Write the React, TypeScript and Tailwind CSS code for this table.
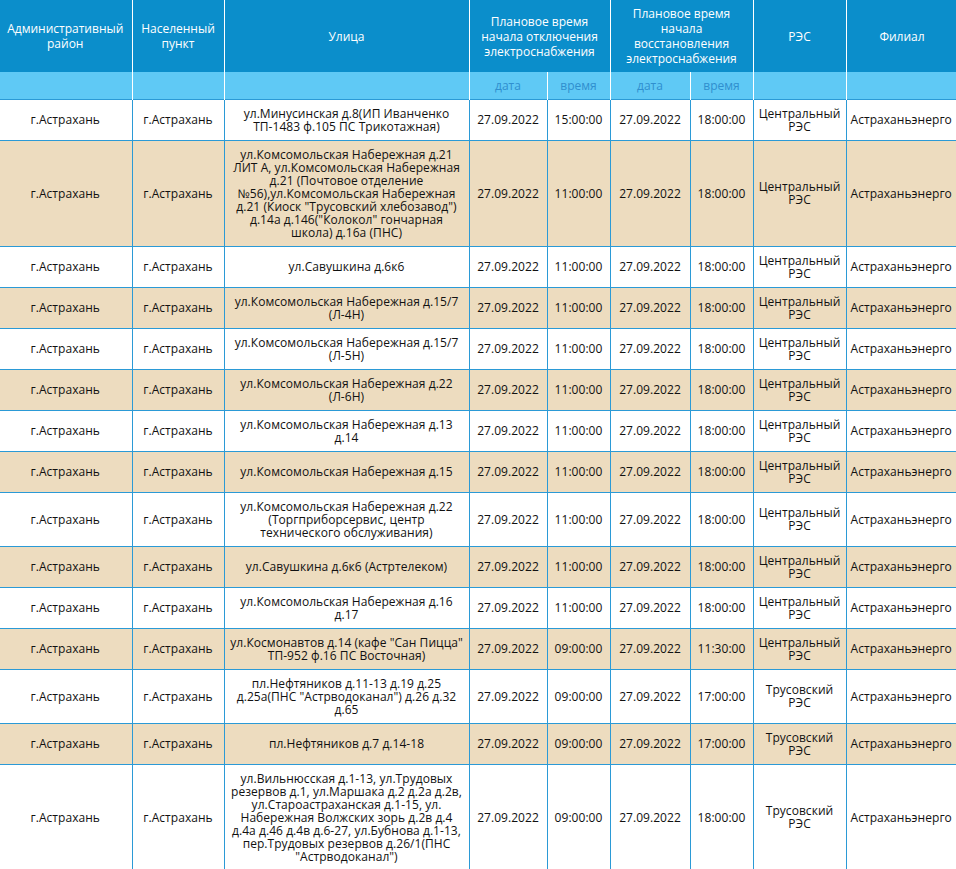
import React from 'react';

type Row = {
  street: string;
  offTime: string;
  onTime: string;
  res: string;
};

const rows: Row[] = [
  { street: 'ул.Минусинская д.8(ИП Иванченко ТП-1483 ф.105 ПС Трикотажная)', offTime: '15:00:00', onTime: '18:00:00', res: 'Центральный РЭС' },
  { street: 'ул.Комсомольская Набережная д.21 ЛИТ А, ул.Комсомольская Набережная д.21 (Почтовое отделение №56),ул.Комсомольская Набережная д.21 (Киоск "Трусовский хлебозавод") д.14а д.146("Колокол" гончарная школа) д.16а (ПНС)', offTime: '11:00:00', onTime: '18:00:00', res: 'Центральный РЭС' },
  { street: 'ул.Савушкина д.6к6', offTime: '11:00:00', onTime: '18:00:00', res: 'Центральный РЭС' },
  { street: 'ул.Комсомольская Набережная д.15/7 (Л-4Н)', offTime: '11:00:00', onTime: '18:00:00', res: 'Центральный РЭС' },
  { street: 'ул.Комсомольская Набережная д.15/7 (Л-5Н)', offTime: '11:00:00', onTime: '18:00:00', res: 'Центральный РЭС' },
  { street: 'ул.Комсомольская Набережная д.22 (Л-6Н)', offTime: '11:00:00', onTime: '18:00:00', res: 'Центральный РЭС' },
  { street: 'ул.Комсомольская Набережная д.13 д.14', offTime: '11:00:00', onTime: '18:00:00', res: 'Центральный РЭС' },
  { street: 'ул.Комсомольская Набережная д.15', offTime: '11:00:00', onTime: '18:00:00', res: 'Центральный РЭС' },
  { street: 'ул.Комсомольская Набережная д.22 (Торгприборсервис, центр технического обслуживания)', offTime: '11:00:00', onTime: '18:00:00', res: 'Центральный РЭС' },
  { street: 'ул.Савушкина д.6к6 (Астртелеком)', offTime: '11:00:00', onTime: '18:00:00', res: 'Центральный РЭС' },
  { street: 'ул.Комсомольская Набережная д.16 д.17', offTime: '11:00:00', onTime: '18:00:00', res: 'Центральный РЭС' },
  { street: 'ул.Космонавтов д.14 (кафе "Сан Пицца" ТП-952 ф.16 ПС Восточная)', offTime: '09:00:00', onTime: '11:30:00', res: 'Центральный РЭС' },
  { street: 'пл.Нефтяников д.11-13 д.19 д.25 д.25а(ПНС "Астрводоканал") д.26 д.32 д.65', offTime: '09:00:00', onTime: '17:00:00', res: 'Трусовский РЭС' },
  { street: 'пл.Нефтяников д.7 д.14-18', offTime: '09:00:00', onTime: '17:00:00', res: 'Трусовский РЭС' },
  { street: 'ул.Вильнюсская д.1-13, ул.Трудовых резервов д.1, ул.Маршака д.2 д.2а д.2в, ул.Староастраханская д.1-15, ул. Набережная Волжских зорь д.2в д.4 д.4а д.46 д.4в д.6-27, ул.Бубнова д.1-13, пер.Трудовых резервов д.26/1(ПНС "Астрводоканал")', offTime: '09:00:00', onTime: '18:00:00', res: 'Трусовский РЭС' },
];

const th = 'border-r border-white px-1 py-[6px] align-middle text-center font-normal';
const td = 'border-r border-b border-[#2b9ad6] px-[4px] py-[7px] align-middle text-center';

const App: React.FC = () => {
  return (
    <div className="w-[956px] h-[869px] overflow-hidden bg-white">
      <table
        className="table-fixed border-collapse w-[959px] text-[12px] leading-[13px] text-[#111] -ml-px"
        style={{ fontFamily: '"Open Sans", "Noto Sans", sans-serif' }}
      >
        <colgroup>
          <col className="w-[133px]" />
          <col className="w-[92px]" />
          <col className="w-[245px]" />
          <col className="w-[78px]" />
          <col className="w-[63px]" />
          <col className="w-[80px]" />
          <col className="w-[63px]" />
          <col className="w-[93px]" />
          <col className="w-[112px]" />
        </colgroup>
        <thead>
          <tr className="bg-[#0b8ecb] text-white leading-[15px] h-[72px]">
            <th className={th}>Административный район</th>
            <th className={th}>Населенный пункт</th>
            <th className={th}>Улица</th>
            <th colSpan={2} className={th}>Плановое время начала отключения электроснабжения</th>
            <th colSpan={2} className={th}>Плановое время начала восстановления электроснабжения</th>
            <th className={th}>РЭС</th>
            <th className={th}>Филиал</th>
          </tr>
          <tr className="bg-[#5fc9f5] text-[#2f8fcf] h-[27px] border-b border-[#2b9ad6]">
            <th className={th}></th>
            <th className={th}></th>
            <th className={th}></th>
            <th className={th}>дата</th>
            <th className={th}>время</th>
            <th className={th}>дата</th>
            <th className={th}>время</th>
            <th className={th}></th>
            <th className={th}></th>
          </tr>
        </thead>
        <tbody className="font-medium tracking-[0.05px]">
          {rows.map((r, i) => (
            <tr key={i} className={i % 2 === 1 ? 'bg-[#eddcbf]' : 'bg-white'}>
              <td className={td}>г.Астрахань</td>
              <td className={td}>г.Астрахань</td>
              <td className={td}>{r.street}</td>
              <td className={td}>27.09.2022</td>
              <td className={td}>{r.offTime}</td>
              <td className={td}>27.09.2022</td>
              <td className={td}>{r.onTime}</td>
              <td className={td}>{r.res}</td>
              <td className={`${td} text-left px-[3px]`}>Астраханьэнерго</td>
            </tr>
          ))}
        </tbody>
      </table>
    </div>
  );
};

export default App;
